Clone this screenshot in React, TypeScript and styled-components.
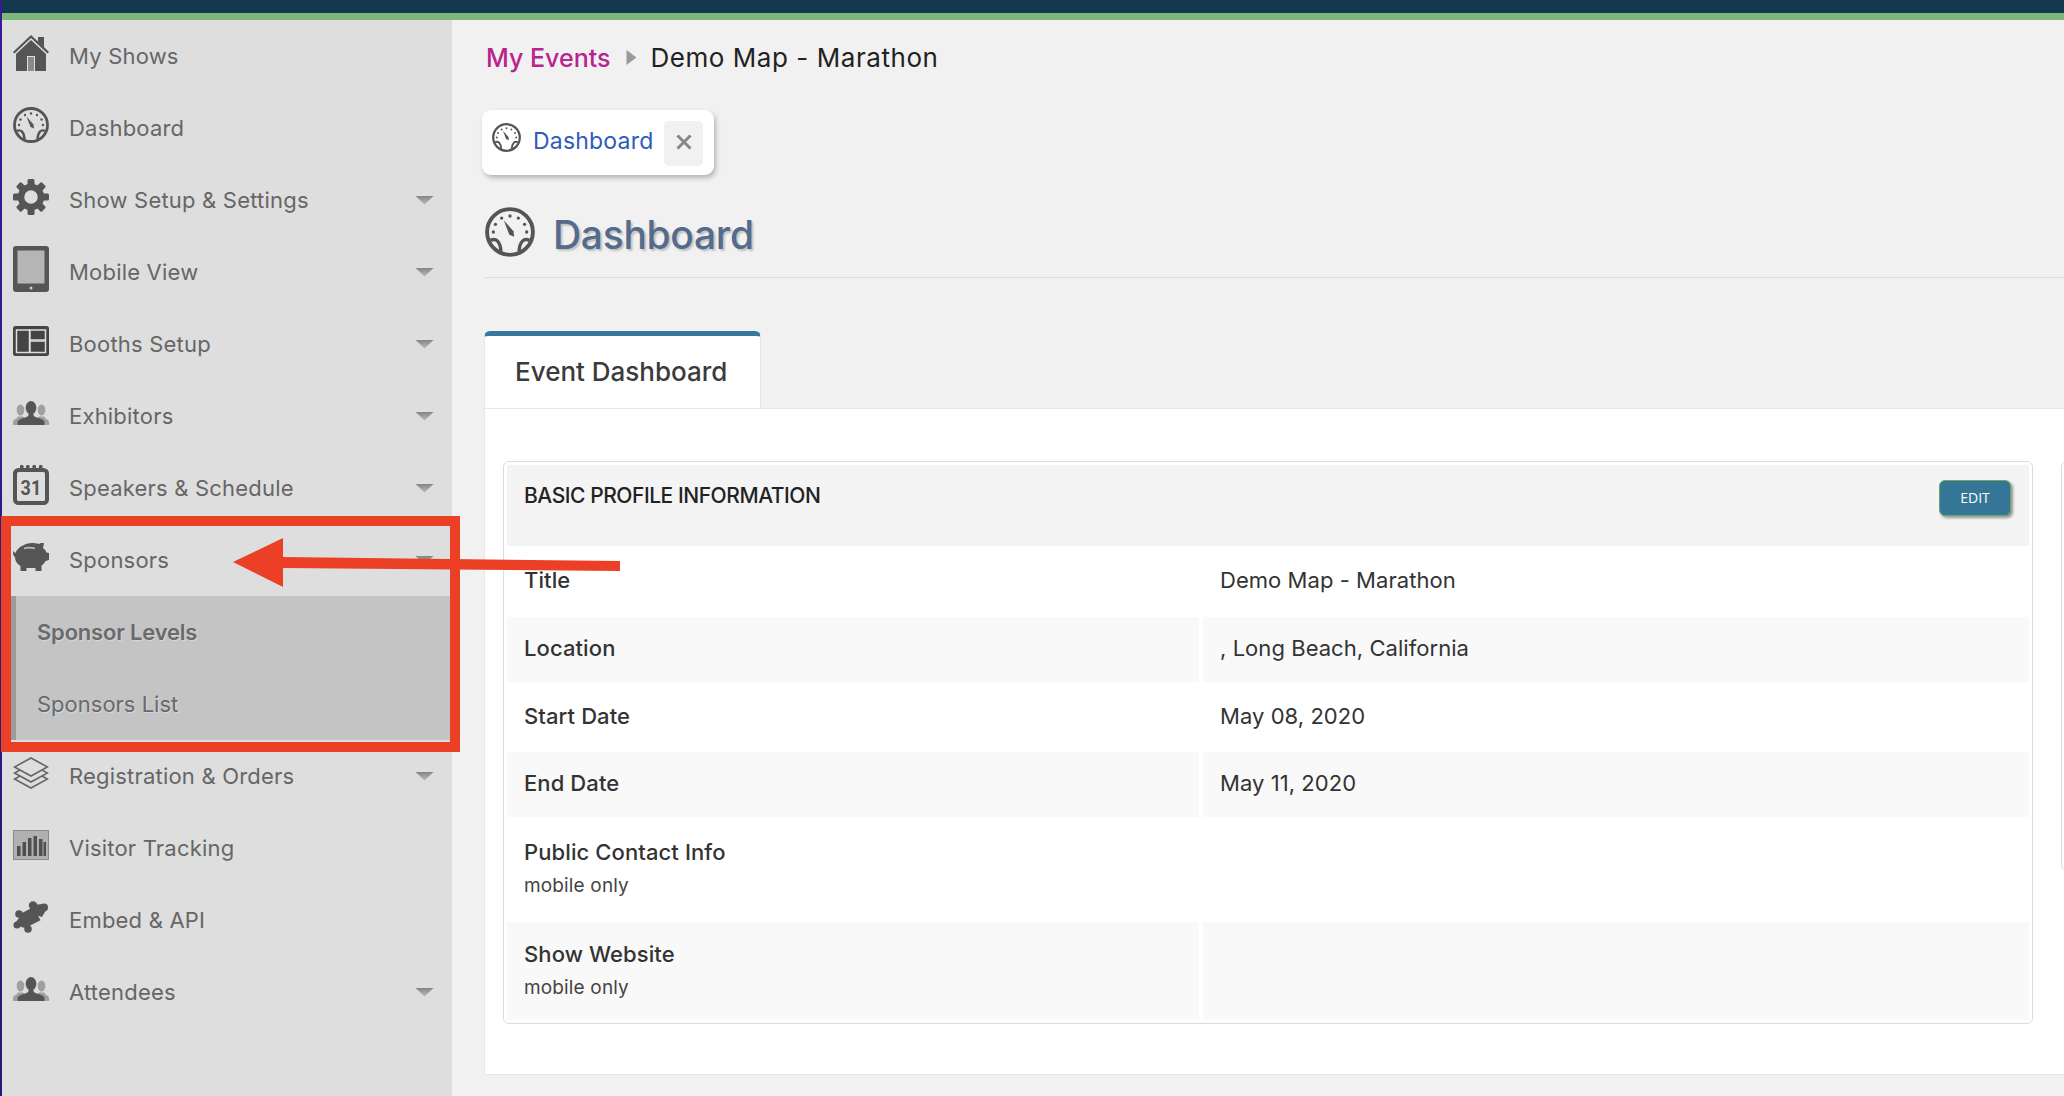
import styled, { createGlobalStyle } from "styled-components";
import type { ReactNode } from "react";

const GlobalStyle = createGlobalStyle`
  html, body {
    margin: 0;
    padding: 0;
    background: #f1f1f1;
  }
  * {
    box-sizing: border-box;
  }
`;

const FONT = `Inter, "Noto Sans", sans-serif`;

const Page = styled.div`
  position: relative;
  display: flex;
  width: 2064px;
  height: 1096px;
  overflow: hidden;
  font-family: ${FONT};
`;

const Strip = styled.div`
  flex: 0 0 2px;
  background: linear-gradient(#3a1a94, #1f1a78);
`;

const Shell = styled.div`
  flex: 1;
  min-width: 0;
  display: flex;
  flex-direction: column;
`;

const TopBar = styled.div`
  flex: 0 0 20px;
  background: #14384f;
  border-bottom: 7px solid #7db77b;
`;

const Body = styled.div`
  flex: 1;
  min-height: 0;
  display: flex;
`;

const Sidebar = styled.nav`
  flex: 0 0 450px;
  background: #dedede;
`;

const Row = styled.div`
  height: 72px;
  display: flex;
  align-items: center;
  padding-left: 11px;
  color: #666;
  font-size: 22px;
  letter-spacing: 0.2px;
`;

const IconSlot = styled.span`
  flex: 0 0 36px;
  width: 36px;
  margin-right: 20px;
  margin-bottom: 6px;
  display: flex;
  justify-content: center;
  color: #555;
  svg {
    display: block;
  }
`;

const Caret = styled.span`
  margin-left: auto;
  margin-right: 18px;
  width: 19px;
  height: 9px;
  background: linear-gradient(#858585, #bdbdbd);
  clip-path: polygon(0 0, 100% 0, 50% 100%);
`;

const SubMenu = styled.div`
  margin-left: 7px;
  border-left: 7px solid #9c9c9c;
  background: #c4c4c4;
`;

const SubItem = styled.div<{ $active?: boolean }>`
  height: 72px;
  display: flex;
  align-items: center;
  padding-left: 21px;
  font-size: 22px;
  color: #6a6a6a;
  font-weight: ${(p) => (p.$active ? 600 : 400)};
  letter-spacing: ${(p) => (p.$active ? "-0.2px" : "0")};
  text-shadow: 1px 1px 1px rgba(255, 255, 255, 0.35);
`;

const Main = styled.main`
  flex: 1;
  min-width: 0;
  padding-left: 32px;
  overflow: hidden;
`;

const Crumbs = styled.div`
  height: 76px;
  display: flex;
  align-items: center;
  padding: 0 0 1px 2px;
  font-size: 25px;
`;

const CrumbLink = styled.span`
  color: #b9238f;
  font-weight: 500;
`;

const CrumbArrow = styled.span`
  width: 10px;
  height: 15px;
  margin: 0 14px 0 16px;
  background: #9a9a9a;
  clip-path: polygon(0 0, 100% 50%, 0 100%);
`;

const CrumbCurrent = styled.span`
  color: #222;
  font-size: 26px;
  letter-spacing: 0.55px;
`;

const Chip = styled.div`
  width: 232px;
  height: 65px;
  margin: 14px 0 0 -2px;
  padding: 13px 11px 0 10px;
  display: flex;
  align-items: flex-start;
  background: #fff;
  border-radius: 9px;
  box-shadow: 2px 3px 5px rgba(0, 0, 0, 0.25);
`;

const ChipLabel = styled.span`
  width: 120px;
  margin-left: 12px;
  overflow: hidden;
  white-space: nowrap;
  color: #2d5bbd;
  font-size: 23px;
  line-height: 36px;
  letter-spacing: 0.2px;
`;

const ChipClose = styled.span`
  margin-left: auto;
  margin-top: -2px;
  width: 39px;
  height: 45px;
  padding-bottom: 3px;
  display: flex;
  align-items: center;
  justify-content: center;
  background: #f1f1f1;
  border-radius: 5px;
`;

const PageHead = styled.div`
  height: 103px;
  display: flex;
  align-items: flex-start;
  padding: 32px 0 0 1px;
  border-bottom: 1px solid #dcdcdc;
`;

const PageTitle = styled.h1`
  margin: 0 0 0 18px;
  color: #546b8c;
  font-size: 39px;
  line-height: 56px;
  font-weight: 500;
  letter-spacing: -0.3px;
  text-shadow: 2px 2px 2px rgba(0, 0, 0, 0.2);
`;

const Tab = styled.div`
  width: 277px;
  height: 77px;
  margin-top: 53px;
  padding: 0 0 2px 30px;
  display: flex;
  align-items: center;
  background: #fff;
  border: 1px solid #e6e6e6;
  border-top: 5px solid #37799b;
  border-bottom: 0;
  border-radius: 6px 6px 0 0;
  color: #3b3b3b;
  font-size: 26px;
  font-weight: 500;
`;

const Panel = styled.section`
  width: 1600px;
  height: 667px;
  display: flex;
  align-items: flex-start;
  gap: 28px;
  padding: 52px 0 0 18px;
  background: #fff;
  border: 1px solid #e6e6e6;
`;

const Card = styled.div`
  flex: 0 0 1530px;
  padding: 3px;
  background: #fff;
  border: 1px solid #dcdcdc;
  border-radius: 6px;
`;

const SideCard = styled.div`
  flex: 0 0 400px;
  height: 410px;
  background: #fff;
  border: 1px solid #dcdcdc;
  border-radius: 6px;
`;

const CardHead = styled.div`
  height: 81px;
  display: flex;
  align-items: flex-start;
  justify-content: space-between;
  padding: 15px 18px 15px 17px;
  background: #f4f4f4;
`;

const CardTitle = styled.h2`
  margin: 1px 0 0;
  color: #222;
  font-size: 21px;
  line-height: 30px;
  font-weight: 500;
  letter-spacing: -0.45px;
`;

const EditButton = styled.button`
  width: 72px;
  height: 36px;
  padding: 0 0 2px;
  background: #357696;
  border: 1px solid #6aa86a;
  border-radius: 6px;
  box-shadow: 2px 2px 3px rgba(0, 0, 0, 0.4);
  color: #fff;
  font-family: "Open Sans", sans-serif;
  font-size: 14px;
`;

const InfoRow = styled.div<{ $height: number; $shaded?: boolean }>`
  height: ${(p) => p.$height}px;
  display: grid;
  grid-template-columns: 692px 1fr;
  gap: 4px;
  > div {
    background: ${(p) => (p.$shaded ? "#f9f9f9" : "#fff")};
  }
`;

const LabelCell = styled.div`
  display: flex;
  flex-direction: column;
  justify-content: center;
  padding: 0 0 3px 17px;
`;

const ValueCell = styled.div`
  display: flex;
  align-items: center;
  padding: 0 0 3px 17px;
  color: #333;
  font-size: 22px;
  letter-spacing: 0.05px;
`;

const Label = styled.div`
  color: #333;
  font-size: 22px;
  line-height: 30px;
  font-weight: 500;
  letter-spacing: 0.1px;
`;

const Note = styled.div`
  margin-top: 6px;
  color: #444;
  font-size: 19px;
  line-height: 26px;
  letter-spacing: 0.15px;
`;

const RedFrame = styled.div`
  position: absolute;
  left: 1px;
  top: 516px;
  width: 459px;
  height: 236px;
  border: 10px solid #eb4026;
`;

const Arrow = styled.svg`
  position: absolute;
  left: 230px;
  top: 535px;
`;

const IconHome = () => (
  <svg width="36" height="36" viewBox="0 0 36 36">
    <path fill="#555" d="M18 0 25 6.500V2h6v10l5 5-1.500 1.500L18 3 1.500 18.500 0 17z" />
    <path fill="#555" d="M18 5 33 19v17H22V21h-8v15H3V19z" />
    <rect x="15" y="22" width="6" height="14" fill="#8a8a8a" />
  </svg>
);

const IconGauge = ({ size = 36, color = "#555" }: { size?: number; color?: string }) => (
  <svg width={size} height={size} viewBox="0 0 36 36" fill="none">
    <circle cx="18" cy="18" r="16.500" stroke={color} strokeWidth="2.800" />
    <g fill={color}>
      <circle cx="18" cy="6.500" r="1.200" />
      <circle cx="12" cy="8" r="1.200" />
      <circle cx="24" cy="8" r="1.200" />
      <circle cx="7.500" cy="12.500" r="1.200" />
      <circle cx="28.500" cy="12.500" r="1.200" />
      <circle cx="6" cy="18" r="1.200" />
      <circle cx="30" cy="18" r="1.200" />
      <path d="M13.500 9.500 20.500 17.500 21 21.500 17.500 20z" />
    </g>
    <path
      d="M4 24c4-2 7 1 7.500 8M32 24c-4-2-7 1-7.500 8"
      stroke={color}
      strokeWidth="2.400"
    />
  </svg>
);

const GEAR_TEETH = [0, 45, 90, 135, 180, 225, 270, 315];

const IconGear = () => (
  <svg width="36" height="36" viewBox="0 0 36 36">
    <g fill="#555">
      {GEAR_TEETH.map((deg) => (
        <rect
          key={deg}
          x="14.500"
          y="0"
          width="7"
          height="9"
          rx="1.500"
          transform={`rotate(${deg} 18 18)`}
        />
      ))}
    </g>
    <circle cx="18" cy="18" r="10" fill="none" stroke="#555" strokeWidth="6.500" />
  </svg>
);

const IconTablet = () => (
  <svg width="36" height="46" viewBox="0 0 36 46">
    <rect width="36" height="46" rx="3" fill="#555" />
    <rect x="4.500" y="4.500" width="27" height="33" fill="#b5b5b5" />
    <circle cx="18" cy="42" r="1.500" fill="#ccc" />
  </svg>
);

const IconBooths = () => (
  <svg width="36" height="30" viewBox="0 0 36 30">
    <rect width="36" height="30" rx="2.500" fill="#444" />
    <rect x="3.500" y="4" width="13" height="22.500" fill="#444" stroke="#ddd" strokeWidth="1.500" />
    <rect x="17" y="4" width="15.500" height="10" fill="#444" stroke="#ddd" strokeWidth="1.500" />
    <rect x="17" y="15" width="15.500" height="11.500" fill="#444" stroke="#ddd" strokeWidth="1.500" />
  </svg>
);

const IconPeople = () => (
  <svg width="36" height="24" viewBox="0 0 36 24">
    <g fill="#a0a0a0">
      <ellipse cx="7.500" cy="9" rx="3.800" ry="5.500" />
      <path d="M0 24v-3c0-2.500 4-3 5-5.500h5l4 4v4.500z" />
      <ellipse cx="28.500" cy="9" rx="3.800" ry="5.500" />
      <path d="M36 24v-3c0-2.500-4-3-5-5.500h-5l-4 4v4.500z" />
    </g>
    <ellipse cx="18" cy="6.800" rx="5.400" ry="6.800" fill="#555" />
    <path fill="#555" d="M4.500 24v-3c0-3 6-3.500 10-5.500 1-.6 1-1 1-2.500h5c0 1.500 0 1.900 1 2.500 4 2 10 2.500 10 5.500v3z" />
  </svg>
);

const IconCalendar = () => (
  <svg width="36" height="40" viewBox="0 0 36 40">
    <rect x="2" y="5" width="32" height="33" rx="3.500" fill="none" stroke="#555" strokeWidth="4" />
    <g fill="#555">
      <rect x="7" y="0" width="3.500" height="6" rx="1.200" />
      <rect x="13" y="0" width="3.500" height="6" rx="1.200" />
      <rect x="19.500" y="0" width="3.500" height="6" rx="1.200" />
      <rect x="26" y="0" width="3.500" height="6" rx="1.200" />
    </g>
    <text
      x="18"
      y="29.500"
      textAnchor="middle"
      fontFamily="Roboto, sans-serif"
      fontWeight="700"
      fontSize="20"
      textLength="21"
      lengthAdjust="spacingAndGlyphs"
      fill="#555"
    >
      31
    </text>
  </svg>
);

const IconPiggy = () => (
  <svg width="36" height="28" viewBox="0 0 36 28">
    <path
      fill="#555"
      d="M7 4 13 1c4-1.300 9-1.300 13 0 1-1 3-1.500 5-1l-1 5c2 1.500 3 3 3.500 4.500L36 10v7l-3.500 1c-1 2-2.500 3.500-4 4.500V28h-6v-3h-9v3h-6v-5C4 21 2 18 2 14 0 13 0 10 0 8c1 1 2 2 2.500 2C3 8 5 6 7 4z"
    />
    <path stroke="#bbb" strokeWidth="1.800" fill="none" d="M11 5.500c3.500-1.200 7.500-1.200 11 0" />
  </svg>
);

const IconLayers = () => (
  <svg width="36" height="32" viewBox="0 0 36 32" fill="none" stroke="#666" strokeWidth="1.600">
    <path fill="#dedede" d="M1.500 22 18 31l16.500-9L18 13z" />
    <path fill="#dedede" d="M1.500 16 18 25l16.500-9L18 7z" />
    <path fill="#dedede" d="M1.500 10 18 19l16.500-9L18 1z" />
  </svg>
);

const IconBars = () => (
  <svg width="36" height="30" viewBox="0 0 36 30">
    <rect x=".5" y=".5" width="35" height="29" fill="#b0b0b0" stroke="#8a8a8a" />
    <g fill="#4f4f4f">
      <rect x="4" y="16" width="3.500" height="10" />
      <rect x="9.500" y="12" width="3.500" height="14" />
      <rect x="15" y="8" width="3.500" height="18" />
      <rect x="20.500" y="6" width="3.500" height="20" />
      <rect x="26" y="9" width="3.500" height="17" />
      <rect x="30.500" y="12" width="2.500" height="14" />
    </g>
  </svg>
);

const IconPuzzle = () => (
  <svg width="36" height="32" viewBox="0 0 36 32">
    <g fill="#555">
      <rect x="8" y="9" width="17" height="15" transform="rotate(-27 16.500 16.500)" />
      <circle cx="20" cy="4.500" r="4.200" />
      <circle cx="31" cy="6.500" r="4" />
      <circle cx="6" cy="13" r="3.800" />
      <circle cx="4" cy="24" r="3.500" />
      <circle cx="15" cy="28" r="3.800" />
      <path d="M19 4 30 3l3 6-4 7-10-3zM3 21l6-8 8 15-9-2z" />
    </g>
  </svg>
);

const ICONS: Record<string, ReactNode> = {
  home: <IconHome />,
  gauge: <IconGauge />,
  gear: <IconGear />,
  tablet: <IconTablet />,
  booths: <IconBooths />,
  people: <IconPeople />,
  calendar: <IconCalendar />,
  piggy: <IconPiggy />,
  layers: <IconLayers />,
  bars: <IconBars />,
  puzzle: <IconPuzzle />,
};

const NavRow = ({ icon, label, caret }: { icon: string; label: string; caret?: boolean }) => (
  <Row>
    <IconSlot>{ICONS[icon]}</IconSlot>
    {label}
    {caret && <Caret />}
  </Row>
);

const App = () => (
  <Page>
    <GlobalStyle />
    <Strip />
    <Shell>
      <TopBar />
      <Body>
        <Sidebar>
          <NavRow icon="home" label="My Shows" />
          <NavRow icon="gauge" label="Dashboard" />
          <NavRow icon="gear" label="Show Setup & Settings" caret />
          <NavRow icon="tablet" label="Mobile View" caret />
          <NavRow icon="booths" label="Booths Setup" caret />
          <NavRow icon="people" label="Exhibitors" caret />
          <NavRow icon="calendar" label="Speakers & Schedule" caret />
          <NavRow icon="piggy" label="Sponsors" caret />
          <SubMenu>
            <SubItem $active>Sponsor Levels</SubItem>
            <SubItem>Sponsors List</SubItem>
          </SubMenu>
          <NavRow icon="layers" label="Registration & Orders" caret />
          <NavRow icon="bars" label="Visitor Tracking" />
          <NavRow icon="puzzle" label="Embed & API" />
          <NavRow icon="people" label="Attendees" caret />
        </Sidebar>
        <Main>
          <Crumbs>
            <CrumbLink>My Events</CrumbLink>
            <CrumbArrow />
            <CrumbCurrent>Demo Map - Marathon</CrumbCurrent>
          </Crumbs>
          <Chip>
            <IconGauge size={29} />
            <ChipLabel>Dashboard</ChipLabel>
            <ChipClose>
              <svg width="16" height="16" viewBox="0 0 16 16">
                <path d="M1.500 1.500l13 13M14.500 1.500l-13 13" stroke="#888" strokeWidth="3" />
              </svg>
            </ChipClose>
          </Chip>
          <PageHead>
            <IconGauge size={50} />
            <PageTitle>Dashboard</PageTitle>
          </PageHead>
          <Tab>Event Dashboard</Tab>
          <Panel>
            <Card>
              <CardHead>
                <CardTitle>BASIC PROFILE INFORMATION</CardTitle>
                <EditButton>EDIT</EditButton>
              </CardHead>
              <InfoRow $height={71}>
                <LabelCell><Label>Title</Label></LabelCell>
                <ValueCell>Demo Map - Marathon</ValueCell>
              </InfoRow>
              <InfoRow $height={65} $shaded>
                <LabelCell><Label>Location</Label></LabelCell>
                <ValueCell>, Long Beach, California</ValueCell>
              </InfoRow>
              <InfoRow $height={70}>
                <LabelCell><Label>Start Date</Label></LabelCell>
                <ValueCell>May 08, 2020</ValueCell>
              </InfoRow>
              <InfoRow $height={65} $shaded>
                <LabelCell><Label>End Date</Label></LabelCell>
                <ValueCell>May 11, 2020</ValueCell>
              </InfoRow>
              <InfoRow $height={105}>
                <LabelCell>
                  <Label>Public Contact Info</Label>
                  <Note>mobile only</Note>
                </LabelCell>
                <ValueCell />
              </InfoRow>
              <InfoRow $height={98} $shaded>
                <LabelCell>
                  <Label>Show Website</Label>
                  <Note>mobile only</Note>
                </LabelCell>
                <ValueCell />
              </InfoRow>
            </Card>
            <SideCard />
          </Panel>
        </Main>
      </Body>
    </Shell>
    <RedFrame />
    <Arrow width="395" height="55" viewBox="230 535 395 55">
      <path fill="#eb4026" d="M233 562 283 538V557L620 561V571L283 568V587z" />
    </Arrow>
  </Page>
);

export default App;
